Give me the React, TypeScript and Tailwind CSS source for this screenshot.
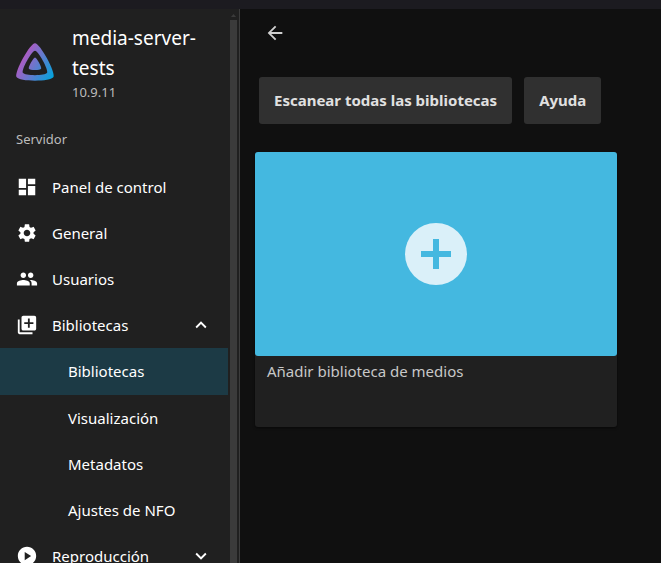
import type { ComponentType, ReactNode } from 'react';
import {
  MdArrowBack,
  MdDashboard,
  MdExpandLess,
  MdExpandMore,
  MdLibraryAdd,
  MdPeople,
  MdPlayCircle,
  MdSettings,
} from 'react-icons/md';

type IconType = ComponentType<{ className?: string }>;

function Logo() {
  return (
    <svg viewBox="0 0 512 512" className="size-12 shrink-0" aria-hidden="true">
      <defs>
        <linearGradient id="brand" x1="126.15" y1="219.32" x2="457.68" y2="410.73" gradientUnits="userSpaceOnUse">
          <stop offset="0" stopColor="#aa5cc3" />
          <stop offset="1" stopColor="#00a4dc" />
        </linearGradient>
      </defs>
      <path
        fill="url(#brand)"
        d="M190.56 329.07c8.63 17.3 122.4 17.12 130.93 0 8.52-17.1-47.9-119.78-65.46-119.8-17.57 0-74.1 102.5-65.47 119.8z"
      />
      <path
        fill="url(#brand)"
        d="M58.75 417.03c25.97 52.15 368.86 51.55 394.55 0S308.93 56.08 256.03 56.08c-52.92 0-223.25 308.8-197.28 360.95zm68.04-45.25c-17.02-34.17 94.6-236.5 129.26-236.5 34.67 0 146.1 202.7 129.26 236.5-16.83 33.8-241.5 34.17-258.52 0z"
      />
    </svg>
  );
}

function NavContent({ icon: Icon, children }: { icon: IconType; children: ReactNode }) {
  return (
    <>
      <Icon className="size-[22px] shrink-0" />
      <span className="flex-1 text-left">{children}</span>
    </>
  );
}

const rowClass = 'flex h-[46px] w-full items-center gap-[14px] pl-4 pr-4';

function NavLink({ icon, children }: { icon: IconType; children: ReactNode }) {
  return (
    <li>
      <a href="#" className={rowClass}>
        <NavContent icon={icon}>{children}</NavContent>
      </a>
    </li>
  );
}

function SubLink({ active = false, children }: { active?: boolean; children: ReactNode }) {
  return (
    <li>
      <a
        href="#"
        aria-current={active ? 'page' : undefined}
        className={`flex items-center pl-[68px] ${active ? 'h-[47px] bg-[#1c3a45]' : 'h-[46px]'}`}
      >
        {children}
      </a>
    </li>
  );
}

function Sidebar() {
  return (
    <aside className="flex w-60 shrink-0 overflow-hidden border-r border-[#3c3c3c] bg-[#202020]">
      <div className="min-w-0 flex-1">
        <div className="flex items-center gap-[13px] pl-[11px] pr-4 pt-[14px]">
          <Logo />
          <div>
            <div className="text-[19px] leading-[30px]">media-server-tests</div>
            <div className="text-[13px] leading-[18px] text-[#bcbcbc]">10.9.11</div>
          </div>
        </div>
        <nav aria-labelledby="server-heading" className="text-[15px]">
          <h2 id="server-heading" className="px-4 pt-[14px] pb-px text-[13px] leading-[48px] text-[#bcbcbc]">
            Servidor
          </h2>
          <ul>
            <NavLink icon={MdDashboard}>Panel de control</NavLink>
            <NavLink icon={MdSettings}>General</NavLink>
            <NavLink icon={MdPeople}>Usuarios</NavLink>
            <li>
              <button type="button" aria-expanded="true" className={rowClass}>
                <NavContent icon={MdLibraryAdd}>Bibliotecas</NavContent>
                <MdExpandLess className="size-[22px]" />
              </button>
              <ul>
                <SubLink active>Bibliotecas</SubLink>
                <SubLink>Visualización</SubLink>
                <SubLink>Metadatos</SubLink>
                <SubLink>Ajustes de NFO</SubLink>
              </ul>
            </li>
            <li>
              <button type="button" aria-expanded="false" className={rowClass}>
                <NavContent icon={MdPlayCircle}>Reproducción</NavContent>
                <MdExpandMore className="size-[22px]" />
              </button>
            </li>
          </ul>
        </nav>
      </div>
      <div className="flex w-[11px] shrink-0 flex-col pl-[2px] pr-[2px]" aria-hidden="true">
        <svg viewBox="0 0 7 11" className="h-[11px] w-[7px]">
          <path d="M1 8 3.5 5 6 8z" fill="#3b3b3b" />
        </svg>
        <div className="flex-1 bg-[#3b3b3b]" />
      </div>
    </aside>
  );
}

function ActionButton({ children }: { children: ReactNode }) {
  return (
    <button type="button" className="rounded-[3px] bg-[#303030] px-[15px] py-3 text-[15px] leading-[23px] font-bold text-[#e0e0e0]">
      {children}
    </button>
  );
}

export default function App() {
  return (
    <div className="flex h-screen flex-col overflow-hidden bg-[#101010] font-['Noto_Sans',sans-serif] text-white">
      <div className="h-[9px] shrink-0 bg-[#1c1b20]" />
      <div className="flex min-h-0 flex-1">
        <Sidebar />
        <main className="min-w-0 flex-1 pl-[15px] pr-11">
          <header className="flex h-12 items-center pl-[9px] text-[#d0d0d0]">
            <button type="button" aria-label="Atrás">
              <MdArrowBack className="size-[22px]" />
            </button>
          </header>
          <div className="flex gap-3 pl-1 pt-5">
            <ActionButton>Escanear todas las bibliotecas</ActionButton>
            <ActionButton>Ayuda</ActionButton>
          </div>
          <button
            type="button"
            className="mt-7 block w-full rounded-[3px] bg-[#202020] text-left shadow-sm shadow-black/40"
          >
            <span className="flex aspect-video w-full items-center justify-center rounded-[3px] bg-[#44b8e0]">
              <svg viewBox="0 0 62 62" className="size-[62px]" aria-hidden="true">
                <circle cx="31" cy="31" r="31" fill="#daf0f9" />
                <path d="M28 16h6v12h12v6H34v12h-6V34H16v-6h12z" fill="#44b8e0" />
              </svg>
            </span>
            <span className="block px-3 pb-11 pt-1 text-[15px] leading-[23px] text-[#c8c8c8]">
              Añadir biblioteca de medios
            </span>
          </button>
        </main>
      </div>
    </div>
  );
}
